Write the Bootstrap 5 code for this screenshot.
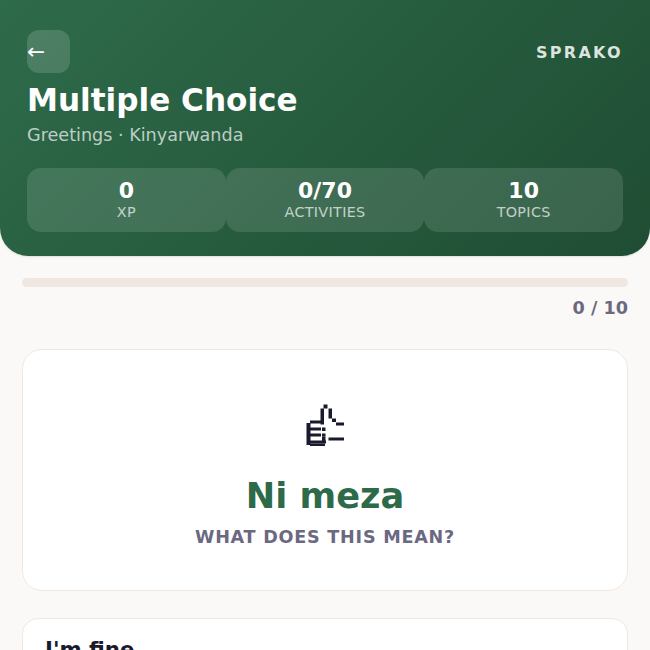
<!DOCTYPE html>
<html lang="en"><head><meta charset="utf-8">
<title>Multiple Choice</title>
<link href="https://cdn.jsdelivr.net/npm/bootstrap@5.3.0/dist/css/bootstrap.min.css" rel="stylesheet">
<style>
html,body{height:650px;overflow:hidden}
body{background:#fbf9f7;font-family:"DejaVu Sans",sans-serif;color:#1a1a2e}
.hero{height:256px;padding:30px 27px 0;background:linear-gradient(135deg,#2e6b4a 0%,#1f4d33 100%);border-radius:0 0 28px 28px;color:#fff;box-shadow:0 1px 2px rgba(0,0,0,.1)}
.back-tile{width:43px;height:43px;border:0;padding:0;border-radius:12px;background:rgba(255,255,255,.15);color:#fff;font-size:21.6px;line-height:44px;text-align:left}
.brand-word{font-size:16px;font-weight:700;letter-spacing:2.3px;color:rgba(255,255,255,.85);margin-top:3px}
.hero-title{font-size:31.1px;font-weight:700;line-height:38px;margin:8px 0 0}
.hero-sub{font-size:17.6px;line-height:21px;margin-top:6px;color:rgba(255,255,255,.7)}
.stat-row{margin-top:22px}
.stat-tile{flex:1;height:64px;border-radius:14px;background:rgba(255,255,255,.12);text-align:center;padding-top:10px}
.stat-num{font-size:22px;font-weight:700;line-height:26px}
.stat-lab{font-size:14.4px;line-height:17px;letter-spacing:.3px;color:rgba(255,255,255,.7)}
.main-col{padding:22px 22px 0}
.track{height:9px;border-radius:5px;background:#f0e8e0}
.count-line{font-size:17.6px;font-weight:700;color:#6b6882;text-align:right;line-height:20px;margin-top:11px}
.q-card{height:242px;margin-top:31px;background:#fff;border:1px solid #f0e8e0;border-radius:20px;text-align:center;padding-top:50px}
.q-icon{display:block;width:50px;height:50px;margin:0 auto}
.q-word{font-size:35.2px;font-weight:700;color:#2d6a4a;line-height:42px;margin-top:25px}
.q-hint{font-size:17.6px;font-weight:700;letter-spacing:.75px;color:#6b6882;line-height:20px;margin-top:10px}
.opt-card{margin-top:27px;height:80px;background:#fff;border:1px solid #f0e8e0;border-radius:16px;padding:19px 22px;font-size:21.3px;font-weight:700;line-height:24px}
</style></head><body>
<header class="hero">
 <div class="d-flex justify-content-between align-items-center">
  <button class="back-tile" type="button">←</button>
  <span class="brand-word">SPRAKO</span>
 </div>
 <h1 class="hero-title">Multiple Choice</h1>
 <div class="hero-sub">Greetings · Kinyarwanda</div>
 <div class="d-flex stat-row">
  <div class="stat-tile"><div class="stat-num">0</div><div class="stat-lab">XP</div></div>
  <div class="stat-tile"><div class="stat-num">0/70</div><div class="stat-lab">ACTIVITIES</div></div>
  <div class="stat-tile"><div class="stat-num">10</div><div class="stat-lab">TOPICS</div></div>
 </div>
</header>
<main class="main-col">
 <div class="track"></div>
 <div class="count-line">0 / 10</div>
 <div class="q-card">
  <svg class="q-icon" viewBox="300 400 50 50" fill="#1a1a2e" aria-hidden="true">
   <rect x="323.5" y="404.5" width="4" height="4"/>
   <rect x="320.5" y="408.5" width="3.5" height="16"/>
   <rect x="328.5" y="408.5" width="3.5" height="10"/>
   <rect x="332" y="418.5" width="4" height="3.5"/>
   <rect x="336" y="422.5" width="8" height="3"/>
   <rect x="306.5" y="423" width="4" height="22"/>
   <rect x="310" y="420.5" width="11" height="3"/>
   <rect x="310" y="427.5" width="11" height="3"/>
   <rect x="322" y="427.5" width="3.5" height="3.5"/>
   <rect x="310" y="433.5" width="11" height="3"/>
   <rect x="322" y="433.5" width="3.5" height="3"/>
   <rect x="322" y="436.5" width="3.5" height="5.5"/>
   <rect x="310" y="440.5" width="16" height="3"/>
   <rect x="328.5" y="437.5" width="15.5" height="3"/>
   <rect x="310" y="443.5" width="15" height="2.5"/>
  </svg>
  <div class="q-word">Ni meza</div>
  <div class="q-hint">WHAT DOES THIS MEAN?</div>
 </div>
 <div class="opt-card">I'm fine</div>
</main>
<script src="https://cdn.jsdelivr.net/npm/bootstrap@5.3.0/dist/js/bootstrap.bundle.min.js"></script>
</body></html>
